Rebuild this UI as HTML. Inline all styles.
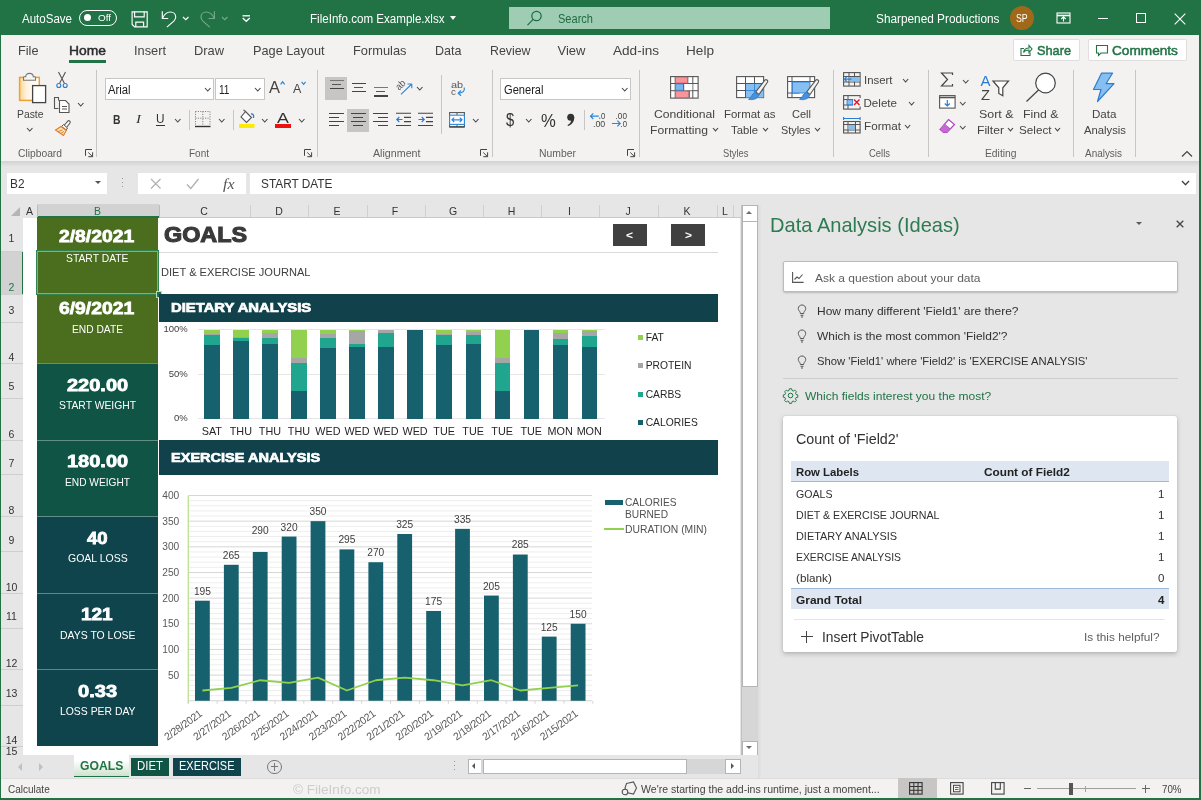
<!DOCTYPE html>
<html><head><meta charset="utf-8"><title>Excel</title>
<style>
html,body{margin:0;padding:0;}
body{will-change:transform;width:1201px;height:800px;overflow:hidden;background:#e6e6e6;position:relative;font-family:"Liberation Sans",sans-serif;}
.a{position:absolute;display:block;}
.t{position:absolute;white-space:nowrap;line-height:1;display:block;}
svg{overflow:visible;}
</style></head><body>
<!-- title+tabs -->
<div class="a" style="left:0px;top:0px;width:1201px;height:35px;background:#217346;"></div>
<span class="t" style="left:22.00px;top:12px;line-height:14px;font-size:12.00px;color:#fff;transform-origin:0 50%;transform:scaleX(0.9608);">AutoSave</span>
<div class="a" style="left:78.5px;top:10px;width:38px;height:15.5px;border:1px solid #fff;border-radius:9px;box-sizing:border-box"></div>
<div class="a" style="left:83.5px;top:14.2px;width:7px;height:7px;border-radius:50%;background:#fff"></div>
<span class="t" style="left:97.50px;top:12px;line-height:11px;font-size:9.50px;color:#fff;transform-origin:0 50%;transform:scaleX(1.0403);">Off</span>
<svg class="a" style="left:0;top:0" width="300" height="35" viewBox="0 0 300 35" fill="none" stroke="#fff" stroke-width="1.150">
<path d="M132.100 11.800h15.100v15.100h-12.600l-2.500-2.500z"/><path d="M134.600 11.800v5h9.600v-5M135.800 26.900v-4.800h7.800v4.800"/>
<path d="M162.300 11.300v7.200h5.900"/><path d="M162.500 18.300c1.600-3.700 4.600-6.300 7.900-6.300 3.100 0 5.300 2.200 5.300 5 0 1.700-.8 3-1.900 4.100l-6.900 6"/>
<path d="M183 17l2.750 2.750L188.500 17"/>
<g opacity=".38"><path d="M214.400 11.300v7.200h-5.900"/><path d="M214.200 18.300c-1.600-3.700-4.600-6.300-7.900-6.300-3.100 0-5.300 2.200-5.300 5 0 1.700.8 3 1.900 4.100l6.900 6"/><path d="M222 17l2.750 2.750L227.500 17"/></g>
<path d="M242.500 15.800h7.500" stroke-width="1.300"/><path d="M242.700 18l3.550 3.300L249.800 18" stroke-width="1.400"/>
</svg>
<span class="t" style="left:309.50px;top:12px;line-height:14px;font-size:12.00px;color:#fff;transform-origin:0 50%;transform:scaleX(0.9650);">FileInfo.com Example.xlsx</span>
<div class="a" style="left:450px;top:16px;width:0;height:0;border-left:3.8px solid transparent;border-right:3.8px solid transparent;border-top:4.2px solid #fff"></div>
<div class="a" style="left:508.5px;top:7px;width:321.5px;height:22px;background:#9fcdb3;"></div>
<svg class="a" style="left:526px;top:10px" width="17" height="17" viewBox="0 0 17 17" fill="none" stroke="#1e6b41" stroke-width="1.2"><circle cx="10.500" cy="6" r="4.700"/><path d="M7.200 9.400L1.500 15.200"/></svg>
<span class="t" style="left:557.50px;top:12px;line-height:14px;font-size:12.00px;color:#1e6b41;transform-origin:0 50%;transform:scaleX(0.9205);">Search</span>
<span class="t" style="left:876.00px;top:12px;line-height:14px;font-size:12.00px;color:#fff;transform-origin:0 50%;transform:scaleX(0.9847);">Sharpened Productions</span>
<div class="a" style="left:1010px;top:6px;width:24px;height:24px;border-radius:50%;background:#a0691a"></div>
<span class="t" style="left:1015.50px;top:13px;line-height:11px;font-size:10.20px;color:#fff;transform-origin:0 50%;transform:scaleX(0.8599);">SP</span>
<svg class="a" style="left:1056px;top:12px" width="15" height="12" viewBox="0 0 15 12" fill="none" stroke="#fff" stroke-width="1.1"><rect x="1" y="1" width="13" height="10"/><path d="M1 3.500h13" stroke-width="1.600"/><path d="M7.500 9.500v-4.500M5.300 7l2.200-2.200 2.200 2.200"/></svg>
<div class="a" style="left:1098px;top:17.6px;width:10px;height:1.1px;background:#fff;"></div>
<div class="a" style="left:1136px;top:13px;width:10px;height:10px;border:1.1px solid #fff;box-sizing:border-box"></div>
<svg class="a" style="left:1174px;top:12.500px" width="12" height="12" viewBox="0 0 12 12" stroke="#fff" stroke-width="1.100"><path d="M0.700 0.700L11.300 11.300M11.300 0.700L0.700 11.300"/></svg>
<div class="a" style="left:1px;top:35px;width:1200px;height:125.7px;background:#f3f2f1;"></div>
<span class="t" style="left:17.50px;top:43px;line-height:15px;font-size:13.00px;color:#444;transform-origin:0 50%;transform:scaleX(0.9786);">File</span>
<span class="t" style="left:133.50px;top:43px;line-height:15px;font-size:13.00px;color:#444;transform-origin:0 50%;transform:scaleX(0.9842);">Insert</span>
<span class="t" style="left:194.00px;top:43px;line-height:15px;font-size:13.00px;color:#444;transform-origin:0 50%;transform:scaleX(0.9889);">Draw</span>
<span class="t" style="left:252.50px;top:43px;line-height:15px;font-size:13.00px;color:#444;transform-origin:0 50%;transform:scaleX(0.9794);">Page Layout</span>
<span class="t" style="left:352.50px;top:43px;line-height:15px;font-size:13.00px;color:#444;transform-origin:0 50%;transform:scaleX(0.9875);">Formulas</span>
<span class="t" style="left:434.50px;top:43px;line-height:15px;font-size:13.00px;color:#444;transform-origin:0 50%;transform:scaleX(0.9650);">Data</span>
<span class="t" style="left:489.50px;top:43px;line-height:15px;font-size:13.00px;color:#444;transform-origin:0 50%;transform:scaleX(0.9502);">Review</span>
<span class="t" style="left:557.50px;top:43px;line-height:15px;font-size:13.00px;color:#444;">View</span>
<span class="t" style="left:613.00px;top:43px;line-height:15px;font-size:13.00px;color:#444;transform-origin:0 50%;transform:scaleX(1.0436);">Add-ins</span>
<span class="t" style="left:686.00px;top:43px;line-height:15px;font-size:13.00px;color:#444;transform-origin:0 50%;transform:scaleX(1.0473);">Help</span>
<span class="t" style="left:69.00px;top:43px;line-height:15px;font-size:13.20px;color:#2b2b2b;transform-origin:0 50%;transform:scaleX(1.0508);-webkit-text-stroke:.45px #2b2b2b;">Home</span>
<div class="a" style="left:69px;top:59.5px;width:37px;height:3px;background:#217346;"></div>
<div class="a" style="left:1013px;top:39px;width:66.5px;height:22px;background:#fff;border:1px solid #e1dfdd;border-radius:2px;box-sizing:border-box"></div>
<svg class="a" style="left:1019px;top:43px" width="14" height="14" viewBox="0 0 14 14" fill="none" stroke="#217346" stroke-width="1.100"><path d="M5 5.500H2v7h9V9.500"/><path d="M4.500 9.500c.5-3 2.500-4.500 5.500-4.500V2.500l3 3.500-3 3.500V7C7.500 7 5.500 7.800 4.500 9.500z"/></svg>
<span class="t" style="left:1037.00px;top:43px;line-height:15px;font-size:13.20px;color:#217346;transform-origin:0 50%;transform:scaleX(0.9653);-webkit-text-stroke:.5px #217346;">Share</span>
<div class="a" style="left:1088px;top:39px;width:99px;height:22px;background:#fff;border:1px solid #e1dfdd;border-radius:2px;box-sizing:border-box"></div>
<svg class="a" style="left:1095px;top:44px" width="14" height="13" viewBox="0 0 14 13" fill="none" stroke="#217346" stroke-width="1.100"><path d="M1.500 1.500h11v7.500H6l-2.500 2.500V9h-2z"/></svg>
<span class="t" style="left:1112.00px;top:43px;line-height:15px;font-size:13.20px;color:#217346;transform-origin:0 50%;transform:scaleX(1.0342);-webkit-text-stroke:.5px #217346;">Comments</span>
<!-- ribbon -->
<svg class="a" style="left:18px;top:72px;" width="29" height="32" viewBox="0 0 29 32" fill="none"><defs><linearGradient id="pg" x1="0" y1="0" x2="1" y2="0"><stop offset="0" stop-color="#fbd693"/><stop offset=".35" stop-color="#fdf3e0"/><stop offset="1" stop-color="#fff"/></linearGradient></defs><rect x="1.600" y="5.400" width="19.700" height="23" fill="url(#pg)" stroke="#f0a030" stroke-width="1.500"/><path d="M5.500 8.300V5.600c0-.6.300-.9.900-.9h1.300c0-2 1.300-3.300 3.800-3.300s3.800 1.300 3.800 3.300h1.300c.6 0 .9.300.9.900v2.700z" fill="#f6f5f4" stroke="#777" stroke-width="1.100"/><rect x="14.600" y="13.600" width="13" height="17" fill="#fff" stroke="#444" stroke-width="1.300"/></svg>
<span class="t" style="left:16.50px;top:108px;line-height:12px;font-size:11.60px;color:#444;transform-origin:0 50%;transform:scaleX(0.8934);">Paste</span>
<svg class="a" style="left:26px;top:126.5px" width="7.5" height="5" viewBox="-1 -1 7.5 5" fill="none" stroke="#444" stroke-width="1.1"><path d="M0 0L2.75 3L5.5 0"/></svg>
<svg class="a" style="left:55px;top:71px;" width="14" height="18" viewBox="0 0 14 18" fill="none"><path d="M3.500 1L9.500 12.500M10.500 1L4.500 12.500" stroke="#555" stroke-width="1.100"/><circle cx="3.800" cy="14.500" r="2" stroke="#2b7cd3" stroke-width="1.100"/><circle cx="10.200" cy="14.500" r="2" stroke="#2b7cd3" stroke-width="1.100"/></svg>
<svg class="a" style="left:53px;top:96px;" width="18" height="18" viewBox="0 0 18 18" fill="none"><path d="M5.500 4.500V1.500H1.500v11h4" stroke="#555" stroke-width="1.100"/><path d="M6.500 4.500h6l3.500 3.500v8.500h-9.500z" fill="#fff" stroke="#555" stroke-width="1.100"/><path d="M9 10.500h5M9 13h5" stroke="#555" stroke-width="1"/></svg>
<svg class="a" style="left:76.5px;top:101.5px" width="7.5" height="5" viewBox="-1 -1 7.5 5" fill="none" stroke="#444" stroke-width="1.1"><path d="M0 0L2.75 3L5.5 0"/></svg>
<svg class="a" style="left:54px;top:119px;" width="18" height="18" viewBox="0 0 18 18" fill="none"><path d="M10 6.500l4-4.500c1-1 3 .800 2 2l-3.500 4.500" stroke="#555" stroke-width="1.100" fill="#fff"/><path d="M9.500 5.500l4 3.500-1.500 2-4.500-3.500z" fill="#f3f2f1" stroke="#555" stroke-width="1"/><path d="M7 7.500L1.500 11l8 5.500 2.800-5z" fill="#fbe3c3" stroke="#e07a1f" stroke-width="1.100"/><path d="M4 12.500l4.500-1.500M6.500 14.500l3.500-2" stroke="#e07a1f" stroke-width=".9"/></svg>
<span class="t" style="left:18.00px;top:147px;line-height:12px;font-size:11.00px;color:#605e5c;transform-origin:0 50%;transform:scaleX(0.9345);">Clipboard</span>
<svg class="a" style="left:85px;top:149.0px;" width="9" height="9" viewBox="0 0 9 9" fill="none"><path d="M.5 6.800V.5H7" stroke="#444" stroke-width="1"/><path d="M3.300 3.500l4.200 4.100M7.600 3.300v4.400H3.300" stroke="#444" stroke-width="1"/></svg>
<div class="a" style="left:96px;top:70px;width:1px;height:87px;background:#c8c6c4;"></div>
<div class="a" style="left:105px;top:77.500px;width:109px;height:22px;background:#fff;border:1px solid #c8c6c4;box-sizing:border-box"></div>
<div class="a" style="left:215px;top:77.500px;width:49.500px;height:22px;background:#fff;border:1px solid #c8c6c4;box-sizing:border-box"></div>
<span class="t" style="left:108.00px;top:83px;line-height:14px;font-size:12.00px;color:#222;transform-origin:0 50%;transform:scaleX(0.9373);">Arial</span>
<svg class="a" style="left:203.5px;top:86.5px" width="7.5" height="5" viewBox="-1 -1 7.5 5" fill="none" stroke="#444" stroke-width="1.1"><path d="M0 0L2.75 3L5.5 0"/></svg>
<span class="t" style="left:218.50px;top:83px;line-height:14px;font-size:12.00px;color:#222;transform-origin:0 50%;transform:scaleX(0.8429);">11</span>
<svg class="a" style="left:254px;top:86.5px" width="7.5" height="5" viewBox="-1 -1 7.5 5" fill="none" stroke="#444" stroke-width="1.1"><path d="M0 0L2.75 3L5.5 0"/></svg>
<span class="t" style="left:269.40px;top:79px;line-height:17px;font-size:16.00px;color:#444;transform-origin:0 50%;transform:scaleX(1.0307);">A</span>
<svg class="a" style="left:280px;top:81px;" width="6" height="4" viewBox="0 0 6 4" fill="none"><path d="M.6 3.300L2.600 .8l2 2.500" stroke="#2b88d8" stroke-width="1.200"/></svg>
<span class="t" style="left:293.20px;top:81px;line-height:15px;font-size:12.80px;color:#444;transform-origin:0 50%;transform:scaleX(0.9722);">A</span>
<svg class="a" style="left:301.3px;top:81px;" width="6" height="4" viewBox="0 0 6 4" fill="none"><path d="M.6 .8l2 2.500 2-2.500" stroke="#2b88d8" stroke-width="1.200"/></svg>
<span class="t" style="left:112.50px;top:112px;line-height:15px;font-size:13.00px;color:#333;transform-origin:0 50%;transform:scaleX(0.7989);font-weight:bold;">B</span>
<span class="t" style="left:135.50px;top:111px;line-height:15px;font-size:13.50px;color:#333;transform-origin:0 50%;transform:scaleX(1.1122);font-style:italic;font-family:'Liberation Serif',serif;">I</span>
<span class="t" style="left:155.50px;top:112px;line-height:14px;font-size:12.50px;color:#333;transform-origin:0 50%;transform:scaleX(0.9416);">U</span>
<div class="a" style="left:155.5px;top:125.3px;width:9px;height:1.1px;background:#333;"></div>
<svg class="a" style="left:174px;top:117.5px" width="7.5" height="5" viewBox="-1 -1 7.5 5" fill="none" stroke="#444" stroke-width="1.1"><path d="M0 0L2.75 3L5.5 0"/></svg>
<div class="a" style="left:189px;top:110px;width:1px;height:20px;background:#c8c6c4;"></div>
<svg class="a" style="left:195px;top:111px;" width="16" height="17" viewBox="0 0 16 17" fill="none"><path d="M.5 .5h14.500M.5 .5v13.500M15 .5v13.500M7.800 .5v13.500M.5 7.200h14.500" stroke="#777" stroke-width="1" stroke-dasharray="1 1.400"/><path d="M0 15.500h15.500" stroke="#333" stroke-width="1.400"/></svg>
<svg class="a" style="left:218px;top:117.5px" width="7.5" height="5" viewBox="-1 -1 7.5 5" fill="none" stroke="#444" stroke-width="1.1"><path d="M0 0L2.75 3L5.5 0"/></svg>
<div class="a" style="left:232.5px;top:110px;width:1px;height:20px;background:#c8c6c4;"></div>
<svg class="a" style="left:239px;top:109px;" width="17" height="20" viewBox="0 0 17 20" fill="none"><path d="M6.500 2.500l6 6-5 5-5.500-5.500z" fill="#fff" stroke="#555" stroke-width="1.100"/><path d="M6.500 2.500L4.500 .8" stroke="#555" stroke-width="1.100"/><path d="M12 5c2-.5 3 1 2.500 4" stroke="#2b7cd3" stroke-width="1.300"/><rect x="0" y="15" width="15.500" height="4" fill="#ffeb00"/></svg>
<svg class="a" style="left:261px;top:117.5px" width="7.5" height="5" viewBox="-1 -1 7.5 5" fill="none" stroke="#444" stroke-width="1.1"><path d="M0 0L2.75 3L5.5 0"/></svg>
<span class="t" style="left:276.70px;top:110px;line-height:16px;font-size:14.80px;color:#333;transform-origin:0 50%;transform:scaleX(1.2055);">A</span>
<div class="a" style="left:275px;top:124px;width:16px;height:4px;background:#ee1111;"></div>
<svg class="a" style="left:298px;top:117.5px" width="7.5" height="5" viewBox="-1 -1 7.5 5" fill="none" stroke="#444" stroke-width="1.1"><path d="M0 0L2.75 3L5.5 0"/></svg>
<span class="t" style="left:189.00px;top:147px;line-height:12px;font-size:11.00px;color:#605e5c;transform-origin:0 50%;transform:scaleX(0.9086);">Font</span>
<svg class="a" style="left:304px;top:149.0px;" width="9" height="9" viewBox="0 0 9 9" fill="none"><path d="M.5 6.800V.5H7" stroke="#444" stroke-width="1"/><path d="M3.300 3.500l4.200 4.100M7.600 3.300v4.400H3.300" stroke="#444" stroke-width="1"/></svg>
<div class="a" style="left:316.5px;top:70px;width:1px;height:87px;background:#c8c6c4;"></div>
<div class="a" style="left:325px;top:77px;width:22px;height:22.5px;background:#c8c6c4;"></div>
<div class="a" style="left:329.5px;top:79.65px;width:14px;height:1.1px;background:#777;"></div>
<div class="a" style="left:331.8px;top:83.75px;width:9.4px;height:1.1px;background:#555;"></div>
<div class="a" style="left:329.5px;top:87.85000000000001px;width:14px;height:1.1px;background:#444;"></div>
<div class="a" style="left:351.5px;top:82.75px;width:14px;height:1.1px;background:#444;"></div>
<div class="a" style="left:353.8px;top:87.05px;width:9.4px;height:1.1px;background:#555;"></div>
<div class="a" style="left:351.5px;top:91.25px;width:14px;height:1.1px;background:#444;"></div>
<div class="a" style="left:373.5px;top:86.95px;width:14px;height:1.1px;background:#777;"></div>
<div class="a" style="left:375.8px;top:90.95px;width:9.4px;height:1.1px;background:#555;"></div>
<div class="a" style="left:373.5px;top:95.15px;width:14px;height:1.4px;background:#444;"></div>
<svg class="a" style="left:395px;top:78px;" width="19" height="19" viewBox="0 0 19 19" fill="none"><text x="0" y="0" font-family="Liberation Sans" font-size="10" fill="#555" transform="translate(4.300 12.700) rotate(-45)" textLength="10" lengthAdjust="spacingAndGlyphs">ab</text><path d="M6 16.300L16.800 6M16.800 6h-4.300M16.800 6v4.300" stroke="#2b88d8" stroke-width="1.100"/></svg>
<svg class="a" style="left:416px;top:86px" width="7.5" height="5" viewBox="-1 -1 7.5 5" fill="none" stroke="#444" stroke-width="1.1"><path d="M0 0L2.75 3L5.5 0"/></svg>
<div class="a" style="left:441px;top:75px;width:1px;height:59px;background:#c8c6c4;"></div>
<svg class="a" style="left:450px;top:79px;" width="17" height="19" viewBox="0 0 17 19" fill="none"><text x="1" y="8.700" font-family="Liberation Sans" font-size="9.800" fill="#555" textLength="12.200" lengthAdjust="spacingAndGlyphs">ab</text><text x="1" y="16.200" font-family="Liberation Sans" font-size="9.800" fill="#555">c</text><path d="M14.300 8.500c.6 3.300-1.500 5.700-5.800 5.700M11 11.500l-2.800 2.700 2.800 2.600" stroke="#2b88d8" stroke-width="1.200"/></svg>
<div class="a" style="left:347px;top:109px;width:22px;height:23px;background:#c8c6c4;"></div>
<div class="a" style="left:329px;top:112.5px;width:14.5px;height:1.1px;background:#444;"></div>
<div class="a" style="left:329px;top:116.7px;width:10px;height:1.1px;background:#444;"></div>
<div class="a" style="left:329px;top:120.9px;width:14.5px;height:1.1px;background:#444;"></div>
<div class="a" style="left:329px;top:125.1px;width:10px;height:1.1px;background:#444;"></div>
<div class="a" style="left:351px;top:112.5px;width:14.5px;height:1.1px;background:#444;"></div>
<div class="a" style="left:353.2px;top:116.7px;width:10px;height:1.1px;background:#444;"></div>
<div class="a" style="left:351px;top:120.9px;width:14.5px;height:1.1px;background:#444;"></div>
<div class="a" style="left:353.2px;top:125.1px;width:10px;height:1.1px;background:#444;"></div>
<div class="a" style="left:373px;top:112.5px;width:14.5px;height:1.1px;background:#444;"></div>
<div class="a" style="left:377.5px;top:116.7px;width:10px;height:1.1px;background:#444;"></div>
<div class="a" style="left:373px;top:120.9px;width:14.5px;height:1.1px;background:#444;"></div>
<div class="a" style="left:377.5px;top:125.1px;width:10px;height:1.1px;background:#444;"></div>
<svg class="a" style="left:396px;top:112px;" width="15" height="15" viewBox="0 0 15 15" fill="none"><path d="M0 1.300h15M0 13.500h15M8 5.400h7M8 9.600h7" stroke="#444" stroke-width="1.100"/><path d="M6.500 7.500H.8M3.300 5L.8 7.500l2.500 2.500" stroke="#2b7cd3" stroke-width="1.200"/></svg>
<svg class="a" style="left:418px;top:112px;" width="15" height="15" viewBox="0 0 15 15" fill="none"><path d="M0 1.300h15M0 13.500h15M8 5.400h7M8 9.600h7" stroke="#444" stroke-width="1.100"/><path d="M.5 7.500h5.700M3.700 5l2.500 2.500-2.500 2.500" stroke="#2b7cd3" stroke-width="1.200"/></svg>
<svg class="a" style="left:448.5px;top:111.5px;" width="16" height="16" viewBox="0 0 16 16" fill="none"><rect x=".6" y=".6" width="14.800" height="14.300" stroke="#555" stroke-width="1.100" fill="#fff"/><path d="M8 .6v2.600M8 12.400v2.500" stroke="#555" stroke-width="1"/><rect x=".6" y="3.200" width="14.800" height="9.200" fill="#fff" stroke="#2b88d8" stroke-width="1.100"/><path d="M3 7.800h10M5.200 5.600L3 7.800 5.200 10M10.800 5.600l2.200 2.200-2.200 2.200" stroke="#2b88d8" stroke-width="1.200"/><path d="M.6 14.900h14.800" stroke="#444" stroke-width="1.300"/></svg>
<svg class="a" style="left:471.5px;top:118px" width="7.5" height="5" viewBox="-1 -1 7.5 5" fill="none" stroke="#444" stroke-width="1.1"><path d="M0 0L2.75 3L5.5 0"/></svg>
<span class="t" style="left:372.50px;top:147px;line-height:12px;font-size:11.00px;color:#605e5c;transform-origin:0 50%;transform:scaleX(0.9711);">Alignment</span>
<svg class="a" style="left:479.5px;top:149.0px;" width="9" height="9" viewBox="0 0 9 9" fill="none"><path d="M.5 6.800V.5H7" stroke="#444" stroke-width="1"/><path d="M3.300 3.500l4.200 4.100M7.600 3.300v4.400H3.300" stroke="#444" stroke-width="1"/></svg>
<div class="a" style="left:492px;top:70px;width:1px;height:87px;background:#c8c6c4;"></div>
<div class="a" style="left:500px;top:77.500px;width:130.500px;height:22px;background:#fff;border:1px solid #c8c6c4;box-sizing:border-box"></div>
<span class="t" style="left:503.50px;top:83px;line-height:14px;font-size:12.00px;color:#222;transform-origin:0 50%;transform:scaleX(0.9252);">General</span>
<svg class="a" style="left:621px;top:86.5px" width="7.5" height="5" viewBox="-1 -1 7.5 5" fill="none" stroke="#444" stroke-width="1.1"><path d="M0 0L2.75 3L5.5 0"/></svg>
<span class="t" style="left:506.20px;top:110px;line-height:20px;font-size:17.50px;color:#333;transform-origin:0 50%;transform:scaleX(0.8425);">$</span>
<svg class="a" style="left:525px;top:118px" width="7.5" height="5" viewBox="-1 -1 7.5 5" fill="none" stroke="#444" stroke-width="1.1"><path d="M0 0L2.75 3L5.5 0"/></svg>
<span class="t" style="left:540.60px;top:110px;line-height:21px;font-size:18.50px;color:#333;transform-origin:0 50%;transform:scaleX(0.8997);">%</span>
<svg class="a" style="left:565px;top:112px;" width="11" height="15" viewBox="0 0 11 15" fill="none"><circle cx="5.700" cy="5.300" r="3.500" fill="#333"/><path d="M9.200 5.300c.3 4.300-2.300 7.600-6.200 8.800l-.5-1.100c2.600-1.200 3.700-3 3.700-5.400z" fill="#333"/></svg>
<div class="a" style="left:584px;top:110px;width:1px;height:20px;background:#c8c6c4;"></div>
<svg class="a" style="left:589px;top:110px;" width="18" height="19" viewBox="0 0 18 19" fill="none"><g font-family="Liberation Sans" font-size="9.500" fill="#444"><text x="12" y="8.800" textLength="4.300" lengthAdjust="spacingAndGlyphs">0</text><text x="4" y="16.900" textLength="12.300" lengthAdjust="spacingAndGlyphs">.00</text></g><circle cx="10.800" cy="8.200" r=".6" fill="#444"/><path d="M9.800 6.200H1.500M4.300 3.400L1.500 6.200l2.800 2.800" stroke="#2b88d8" stroke-width="1.200"/></svg>
<svg class="a" style="left:611px;top:110px;" width="18" height="19" viewBox="0 0 18 19" fill="none"><g font-family="Liberation Sans" font-size="9.500" fill="#444"><text x="4.600" y="8.800" textLength="11.400" lengthAdjust="spacingAndGlyphs">.00</text><text x="9.500" y="16.900" textLength="6.500" lengthAdjust="spacingAndGlyphs">.0</text></g><path d="M.9 13.500h8.300M6.400 10.700l2.800 2.800-2.800 2.800" stroke="#2b88d8" stroke-width="1.200"/></svg>
<span class="t" style="left:539.00px;top:147px;line-height:12px;font-size:11.00px;color:#605e5c;transform-origin:0 50%;transform:scaleX(0.9457);">Number</span>
<svg class="a" style="left:627px;top:149.0px;" width="9" height="9" viewBox="0 0 9 9" fill="none"><path d="M.5 6.800V.5H7" stroke="#444" stroke-width="1"/><path d="M3.300 3.500l4.200 4.100M7.600 3.300v4.400H3.300" stroke="#444" stroke-width="1"/></svg>
<div class="a" style="left:638.5px;top:70px;width:1px;height:87px;background:#c8c6c4;"></div>
<svg class="a" style="left:670px;top:76px;" width="29" height="23" viewBox="0 0 29 23" fill="none"><rect x=".6" y=".6" width="27.500" height="21.500" fill="#fff" stroke="#555" stroke-width="1.100"/><path d="M5.200 .6v21.500M17.800 .6v21.500M22.800 .6v21.500M.6 7.500h27.500M.6 14.700h27.500" stroke="#555" stroke-width="1"/><rect x="5.700" y="1.200" width="11.600" height="5.800" fill="#f8959b" stroke="#e8505b" stroke-width=".7"/><rect x="5.700" y="8" width="8" height="6.200" fill="#7ab6ee" stroke="#2b88d8" stroke-width=".7"/><rect x="5.700" y="15.200" width="13.500" height="6.300" fill="#f8959b" stroke="#e8505b" stroke-width=".7"/><rect x="13.700" y="8" width="8.600" height="6.200" fill="#fff"/><path d="M13.700 7.500v7.200M19.200 14.700v7" stroke="#555" stroke-width="1"/></svg>
<span class="t" style="left:654.00px;top:108px;line-height:12px;font-size:11.60px;color:#444;transform-origin:0 50%;transform:scaleX(1.0510);">Conditional</span>
<span class="t" style="left:649.50px;top:124px;line-height:12px;font-size:11.60px;color:#444;transform-origin:0 50%;transform:scaleX(1.0462);">Formatting</span>
<svg class="a" style="left:711.8px;top:127.19999999999999px" width="7" height="4.9" viewBox="-1 -1 7 4.9" fill="none" stroke="#444" stroke-width="1.1"><path d="M0 0L2.5 2.9L5 0"/></svg>
<svg class="a" style="left:735.5px;top:76px;" width="33" height="26" viewBox="0 0 33 26" fill="none"><rect x=".6" y=".6" width="27" height="21" fill="#fff" stroke="#555" stroke-width="1.100"/><path d="M9.500 .6v21M18.500 .6v21M.6 7.500h27M.6 14.500h27" stroke="#555" stroke-width="1"/><rect x="10" y="8" width="17.500" height="13.500" fill="#86bff0"/><path d="M18.500 8v13.500M10 14.500h17.500" stroke="#2b7cd3" stroke-width=".8"/><path d="M28.800 4.200c1.300-1.500 3.700.3 2.600 2L23 18.500l-3.300-2.500z" fill="#f3f2f1" stroke="#555" stroke-width="1.100"/><path d="M19.300 16.300l3.500 2.700c-1.200 3.800-5.500 5.500-10.300 4.300 3-1.200 3-5.600 6.800-7z" fill="#4a90d9" stroke="#2b7cd3" stroke-width=".8"/></svg>
<span class="t" style="left:724.00px;top:108px;line-height:12px;font-size:11.60px;color:#444;transform-origin:0 50%;transform:scaleX(0.9864);">Format as</span>
<span class="t" style="left:731.00px;top:124px;line-height:12px;font-size:11.60px;color:#444;transform-origin:0 50%;transform:scaleX(0.9736);">Table</span>
<svg class="a" style="left:762.3px;top:127.19999999999999px" width="7" height="4.9" viewBox="-1 -1 7 4.9" fill="none" stroke="#444" stroke-width="1.1"><path d="M0 0L2.5 2.9L5 0"/></svg>
<svg class="a" style="left:787px;top:76px;" width="33" height="26" viewBox="0 0 33 26" fill="none"><rect x=".6" y=".6" width="27" height="21" fill="#fff" stroke="#555" stroke-width="1.100"/><path d="M5 .6v21M23 .6v5M.6 5.500h27M.6 17h12" stroke="#555" stroke-width="1"/><rect x="5.500" y="6" width="17.500" height="11" fill="#86bff0" stroke="#2b7cd3" stroke-width=".8"/><path d="M28.800 4.200c1.300-1.500 3.700.3 2.600 2L23 18.500l-3.300-2.500z" fill="#f3f2f1" stroke="#555" stroke-width="1.100"/><path d="M19.300 16.300l3.500 2.700c-1.200 3.800-5.500 5.500-10.300 4.300 3-1.200 3-5.600 6.800-7z" fill="#4a90d9" stroke="#2b7cd3" stroke-width=".8"/></svg>
<span class="t" style="left:792.00px;top:108px;line-height:12px;font-size:11.60px;color:#444;transform-origin:0 50%;transform:scaleX(0.9508);">Cell</span>
<span class="t" style="left:781.00px;top:124px;line-height:12px;font-size:11.60px;color:#444;transform-origin:0 50%;transform:scaleX(0.9339);">Styles</span>
<svg class="a" style="left:814.3px;top:127.19999999999999px" width="7" height="4.9" viewBox="-1 -1 7 4.9" fill="none" stroke="#444" stroke-width="1.1"><path d="M0 0L2.5 2.9L5 0"/></svg>
<span class="t" style="left:722.50px;top:147px;line-height:12px;font-size:11.00px;color:#605e5c;transform-origin:0 50%;transform:scaleX(0.8513);">Styles</span>
<div class="a" style="left:832.5px;top:70px;width:1px;height:87px;background:#c8c6c4;"></div>
<svg class="a" style="left:843px;top:72px;" width="18" height="15" viewBox="0 0 18 15" fill="none"><rect x=".6" y=".6" width="16.500" height="13.500" stroke="#555" stroke-width="1.100"/><path d="M6 .6v13.500M11.500 .6v13.500M.6 4.500h16.500M.6 10h16.500" stroke="#555" stroke-width="1"/><rect x="6.500" y="5" width="10" height="4.500" fill="#86bff0"/><path d="M8.500 7.200H1.500M4 4.700L1.500 7.200 4 9.700" stroke="#2b7cd3" stroke-width="1.200"/></svg>
<span class="t" style="left:863.50px;top:74px;line-height:12px;font-size:11.60px;color:#444;transform-origin:0 50%;transform:scaleX(0.9824);">Insert</span>
<svg class="a" style="left:902.3px;top:77.5px" width="7.2" height="5" viewBox="-1 -1 7.2 5" fill="none" stroke="#444" stroke-width="1.1"><path d="M0 0L2.6 3L5.2 0"/></svg>
<svg class="a" style="left:843px;top:95px;" width="18" height="15" viewBox="0 0 18 15" fill="none"><rect x=".6" y=".6" width="16.500" height="13.500" stroke="#555" stroke-width="1.100"/><path d="M5 .6v13.500M.6 4.500h16.500M.6 10h16.500" stroke="#555" stroke-width="1"/><rect x="4" y="4.800" width="5.500" height="5" fill="#86bff0" stroke="#2b7cd3" stroke-width=".8"/><rect x="10" y="3" width="8" height="8.500" fill="#f3f2f1"/><path d="M11 4.500l5.500 5.500M16.500 4.500L11 10" stroke="#e81123" stroke-width="1.400"/></svg>
<span class="t" style="left:863.50px;top:97px;line-height:12px;font-size:11.60px;color:#444;">Delete</span>
<svg class="a" style="left:908px;top:100.5px" width="7.2" height="5" viewBox="-1 -1 7.2 5" fill="none" stroke="#444" stroke-width="1.1"><path d="M0 0L2.6 3L5.2 0"/></svg>
<svg class="a" style="left:843px;top:117px;" width="18" height="17" viewBox="0 0 18 17" fill="none"><path d="M.6 1.500h16.500M.6 0v3M17.100 0v3" stroke="#2b7cd3" stroke-width="1.100"/><rect x=".6" y="4.500" width="16.500" height="11.500" stroke="#555" stroke-width="1.100"/><path d="M5 4.500v11.500M12.500 4.500v11.500M.6 7.500h16.500M.6 13h16.500" stroke="#555" stroke-width="1"/><rect x="5.500" y="8" width="6.500" height="4.500" fill="#86bff0"/></svg>
<span class="t" style="left:863.50px;top:120px;line-height:12px;font-size:11.60px;color:#444;transform-origin:0 50%;transform:scaleX(1.0071);">Format</span>
<svg class="a" style="left:904px;top:123.8px" width="7.2" height="5" viewBox="-1 -1 7.2 5" fill="none" stroke="#444" stroke-width="1.1"><path d="M0 0L2.6 3L5.2 0"/></svg>
<span class="t" style="left:869.00px;top:147px;line-height:12px;font-size:11.00px;color:#605e5c;transform-origin:0 50%;transform:scaleX(0.8589);">Cells</span>
<div class="a" style="left:928px;top:70px;width:1px;height:87px;background:#c8c6c4;"></div>
<svg class="a" style="left:940px;top:72px;" width="14" height="15" viewBox="0 0 14 15" fill="none"><path d="M12.500 3V1H1.500l6 6.500-6 6.500h11v-2" stroke="#444" stroke-width="1.200"/></svg>
<svg class="a" style="left:961.5px;top:78.5px" width="7.5" height="5" viewBox="-1 -1 7.5 5" fill="none" stroke="#444" stroke-width="1.1"><path d="M0 0L2.75 3L5.5 0"/></svg>
<svg class="a" style="left:939px;top:95px;" width="17" height="14" viewBox="0 0 17 14" fill="none"><rect x=".6" y=".6" width="15.500" height="12.500" fill="#fff" stroke="#555" stroke-width="1.100"/><path d="M.6 2.500h15.500" stroke="#555" stroke-width="1.600"/><path d="M8.300 5v6M5.800 8.500l2.500 2.500 2.500-2.500" stroke="#2b7cd3" stroke-width="1.200"/></svg>
<svg class="a" style="left:959px;top:101px" width="7.5" height="5" viewBox="-1 -1 7.5 5" fill="none" stroke="#444" stroke-width="1.1"><path d="M0 0L2.75 3L5.5 0"/></svg>
<svg class="a" style="left:939px;top:118px;" width="17" height="16" viewBox="0 0 17 16" fill="none"><path d="M9.500 1.500l6 5-7.500 8h-3.500l-3.500-3z" fill="#fff" stroke="#b146c2" stroke-width="1.200"/><path d="M5 5.800l6 5" stroke="#b146c2" stroke-width="1.100"/><path d="M1.200 11.300L5 6l5.800 4.800-2.800 3.500H4.500z" fill="#c668d4"/></svg>
<svg class="a" style="left:959px;top:124.5px" width="7.5" height="5" viewBox="-1 -1 7.5 5" fill="none" stroke="#444" stroke-width="1.1"><path d="M0 0L2.75 3L5.5 0"/></svg>
<span class="t" style="left:980.50px;top:72px;line-height:17px;font-size:15.00px;color:#2b7cd3;">A</span>
<span class="t" style="left:981.00px;top:86px;line-height:17px;font-size:15.00px;color:#444;transform-origin:0 50%;transform:scaleX(0.9822);">Z</span>
<svg class="a" style="left:992px;top:80px;" width="18" height="18" viewBox="0 0 18 18" fill="none"><path d="M1 1h15.500l-5.700 6.800v8l-4-2.300V7.800z" stroke="#444" stroke-width="1.200" fill="#fff"/></svg>
<span class="t" style="left:978.50px;top:108px;line-height:12px;font-size:11.60px;color:#444;transform-origin:0 50%;transform:scaleX(1.0703);">Sort &amp;</span>
<span class="t" style="left:976.50px;top:124px;line-height:12px;font-size:11.60px;color:#444;transform-origin:0 50%;transform:scaleX(1.0474);">Filter</span>
<svg class="a" style="left:1006.8px;top:127.19999999999999px" width="7" height="4.9" viewBox="-1 -1 7 4.9" fill="none" stroke="#444" stroke-width="1.1"><path d="M0 0L2.5 2.9L5 0"/></svg>
<svg class="a" style="left:1025px;top:72px;" width="32" height="31" viewBox="0 0 32 31" fill="none"><circle cx="20.500" cy="11" r="9.800" stroke="#444" stroke-width="1.200" fill="#fff"/><path d="M13.500 18L1.500 29.500" stroke="#444" stroke-width="1.200"/></svg>
<span class="t" style="left:1023.00px;top:108px;line-height:12px;font-size:11.60px;color:#444;transform-origin:0 50%;transform:scaleX(1.0589);">Find &amp;</span>
<span class="t" style="left:1019.00px;top:124px;line-height:12px;font-size:11.60px;color:#444;transform-origin:0 50%;transform:scaleX(1.0081);">Select</span>
<svg class="a" style="left:1053.8px;top:127.19999999999999px" width="7" height="4.9" viewBox="-1 -1 7 4.9" fill="none" stroke="#444" stroke-width="1.1"><path d="M0 0L2.5 2.9L5 0"/></svg>
<span class="t" style="left:984.50px;top:147px;line-height:12px;font-size:11.00px;color:#605e5c;transform-origin:0 50%;transform:scaleX(0.9366);">Editing</span>
<div class="a" style="left:1072.5px;top:70px;width:1px;height:87px;background:#c8c6c4;"></div>
<svg class="a" style="left:1091px;top:72px;" width="25" height="31" viewBox="0 0 25 31" fill="none"><path d="M10.500 1.200h11l-6.500 10.500h8L6.500 29.500l3.500-12H2.500z" fill="#86bff0" stroke="#2b7cd3" stroke-width="1.200" stroke-linejoin="round"/></svg>
<span class="t" style="left:1092.00px;top:108px;line-height:12px;font-size:11.60px;color:#444;">Data</span>
<span class="t" style="left:1083.50px;top:124px;line-height:12px;font-size:11.60px;color:#444;transform-origin:0 50%;transform:scaleX(0.9723);">Analysis</span>
<span class="t" style="left:1085.00px;top:147px;line-height:12px;font-size:11.00px;color:#605e5c;transform-origin:0 50%;transform:scaleX(0.9033);">Analysis</span>
<div class="a" style="left:1135px;top:70px;width:1px;height:87px;background:#c8c6c4;"></div>
<svg class="a" style="left:1181px;top:150px;" width="12" height="8" viewBox="0 0 12 8" fill="none"><path d="M1 6.500L6 1.500l5 5" stroke="#444" stroke-width="1.200"/></svg>
<!-- sheet -->
<div class="a" style="left:1px;top:160.700px;width:1200px;height:6px;background:linear-gradient(#d2d2d2,#e6e6e6)"></div>
<div class="a" style="left:6.5px;top:173px;width:100.5px;height:21px;background:#fff;"></div>
<span class="t" style="left:10.00px;top:177px;line-height:14px;font-size:12.30px;color:#333;transform-origin:0 50%;transform:scaleX(0.9638);">B2</span>
<div class="a" style="left:94.500px;top:181px;width:0;height:0;border-left:3.200px solid transparent;border-right:3.200px solid transparent;border-top:3.500px solid #555"></div>
<div class="a" style="left:121.5px;top:178px;width:1.3px;height:1.3px;background:#999;"></div>
<div class="a" style="left:121.5px;top:182px;width:1.3px;height:1.3px;background:#999;"></div>
<div class="a" style="left:121.5px;top:186px;width:1.3px;height:1.3px;background:#999;"></div>
<div class="a" style="left:137.5px;top:173px;width:108.5px;height:21px;background:#fff;"></div>
<svg class="a" style="left:150px;top:177.5px;" width="12" height="12" viewBox="0 0 12 12" fill="none"><path d="M1 1l9.500 9.500M10.500 1L1 10.500" stroke="#b0b0b0" stroke-width="1.200"/></svg>
<svg class="a" style="left:186px;top:177.5px;" width="14" height="12" viewBox="0 0 14 12" fill="none"><path d="M1 6.500l3.800 4L12.500 1" stroke="#b0b0b0" stroke-width="1.300"/></svg>
<span class="t" style="left:222.50px;top:176px;line-height:16px;font-size:14.50px;color:#555;transform-origin:0 50%;transform:scaleX(1.0990);font-style:italic;font-family:'Liberation Serif',serif;">fx</span>
<div class="a" style="left:250px;top:173px;width:946px;height:21px;background:#fff;"></div>
<span class="t" style="left:260.50px;top:177px;line-height:14px;font-size:12.30px;color:#333;transform-origin:0 50%;transform:scaleX(0.9627);">START DATE</span>
<svg class="a" style="left:1181px;top:180px" width="9" height="5.8" viewBox="-1 -1 9 5.8" fill="none" stroke="#444" stroke-width="1.3"><path d="M0 0L3.5 3.8L7 0"/></svg>
<div class="a" style="left:23px;top:218px;width:717px;height:537px;background:#fff;"></div>
<div class="a" style="left:36.5px;top:204px;width:122.2px;height:13px;background:#d2d2d2;"></div>
<div class="a" style="left:36.5px;top:216.2px;width:122.2px;height:1.7px;background:#217346;"></div>
<span class="t" style="left:26.00px;top:205px;line-height:12px;font-size:10.50px;color:#333;">A</span>
<span class="t" style="left:200.21px;top:205px;line-height:12px;font-size:10.50px;color:#333;">C</span>
<span class="t" style="left:275.21px;top:205px;line-height:12px;font-size:10.50px;color:#333;">D</span>
<span class="t" style="left:333.50px;top:205px;line-height:12px;font-size:10.50px;color:#333;">E</span>
<span class="t" style="left:391.79px;top:205px;line-height:12px;font-size:10.50px;color:#333;">F</span>
<span class="t" style="left:448.92px;top:205px;line-height:12px;font-size:10.50px;color:#333;">G</span>
<span class="t" style="left:507.71px;top:205px;line-height:12px;font-size:10.50px;color:#333;">H</span>
<span class="t" style="left:568.04px;top:205px;line-height:12px;font-size:10.50px;color:#333;">I</span>
<span class="t" style="left:625.38px;top:205px;line-height:12px;font-size:10.50px;color:#333;">J</span>
<span class="t" style="left:683.50px;top:205px;line-height:12px;font-size:10.50px;color:#333;">K</span>
<span class="t" style="left:722.08px;top:205px;line-height:12px;font-size:10.50px;color:#333;">L</span>
<span class="t" style="left:94.00px;top:205px;line-height:12px;font-size:10.50px;color:#217346;">B</span>
<div class="a" style="left:36.5px;top:205px;width:1px;height:12px;background:#bdbdbd;"></div>
<div class="a" style="left:159px;top:205px;width:1px;height:12px;background:#bdbdbd;"></div>
<div class="a" style="left:250px;top:205px;width:1px;height:12px;background:#cfcfcf;"></div>
<div class="a" style="left:308px;top:205px;width:1px;height:12px;background:#cfcfcf;"></div>
<div class="a" style="left:366.5px;top:205px;width:1px;height:12px;background:#cfcfcf;"></div>
<div class="a" style="left:424.5px;top:205px;width:1px;height:12px;background:#cfcfcf;"></div>
<div class="a" style="left:482.5px;top:205px;width:1px;height:12px;background:#cfcfcf;"></div>
<div class="a" style="left:540.5px;top:205px;width:1px;height:12px;background:#cfcfcf;"></div>
<div class="a" style="left:598.5px;top:205px;width:1px;height:12px;background:#cfcfcf;"></div>
<div class="a" style="left:657.5px;top:205px;width:1px;height:12px;background:#cfcfcf;"></div>
<div class="a" style="left:716.5px;top:205px;width:1px;height:12px;background:#cfcfcf;"></div>
<div class="a" style="left:733px;top:205px;width:1px;height:12px;background:#cfcfcf;"></div>
<div class="a" style="left:11.300px;top:206.500px;width:0;height:0;border-left:9.500px solid transparent;border-bottom:9.500px solid #b5b5b5"></div>
<div class="a" style="left:159px;top:217px;width:581.5px;height:1px;background:#c9c9c9;"></div>
<div class="a" style="left:740.5px;top:205px;width:1px;height:550px;background:#c0c0c0;"></div>
<div class="a" style="left:1px;top:251px;width:22px;height:43px;background:#d2d2d2;"></div>
<div class="a" style="left:21.5px;top:251px;width:1.5px;height:43px;background:#217346;"></div>
<span class="t" style="left:8.58px;top:232px;line-height:12px;font-size:10.50px;color:#333;">1</span>
<span class="t" style="left:8.58px;top:281px;line-height:12px;font-size:10.50px;color:#217346;">2</span>
<span class="t" style="left:8.58px;top:304px;line-height:12px;font-size:10.50px;color:#333;">3</span>
<span class="t" style="left:8.58px;top:351px;line-height:12px;font-size:10.50px;color:#333;">4</span>
<span class="t" style="left:8.58px;top:380px;line-height:12px;font-size:10.50px;color:#333;">5</span>
<span class="t" style="left:8.58px;top:428px;line-height:12px;font-size:10.50px;color:#333;">6</span>
<span class="t" style="left:8.58px;top:457px;line-height:12px;font-size:10.50px;color:#333;">7</span>
<span class="t" style="left:8.58px;top:504px;line-height:12px;font-size:10.50px;color:#333;">8</span>
<span class="t" style="left:8.58px;top:534px;line-height:12px;font-size:10.50px;color:#333;">9</span>
<span class="t" style="left:5.66px;top:581px;line-height:12px;font-size:10.50px;color:#333;">10</span>
<span class="t" style="left:6.05px;top:610px;line-height:12px;font-size:10.50px;color:#333;">11</span>
<span class="t" style="left:5.66px;top:657px;line-height:12px;font-size:10.50px;color:#333;">12</span>
<span class="t" style="left:5.66px;top:687px;line-height:12px;font-size:10.50px;color:#333;">13</span>
<span class="t" style="left:5.66px;top:734px;line-height:12px;font-size:10.50px;color:#333;">14</span>
<span class="t" style="left:5.66px;top:745px;line-height:12px;font-size:10.50px;color:#333;">15</span>
<div class="a" style="left:1px;top:251px;width:22px;height:1px;background:#cfcfcf;"></div>
<div class="a" style="left:1px;top:293.5px;width:22px;height:1px;background:#cfcfcf;"></div>
<div class="a" style="left:1px;top:321.5px;width:22px;height:1px;background:#cfcfcf;"></div>
<div class="a" style="left:1px;top:363px;width:22px;height:1px;background:#cfcfcf;"></div>
<div class="a" style="left:1px;top:397.5px;width:22px;height:1px;background:#cfcfcf;"></div>
<div class="a" style="left:1px;top:440px;width:22px;height:1px;background:#cfcfcf;"></div>
<div class="a" style="left:1px;top:474.3px;width:22px;height:1px;background:#cfcfcf;"></div>
<div class="a" style="left:1px;top:516.3px;width:22px;height:1px;background:#cfcfcf;"></div>
<div class="a" style="left:1px;top:551px;width:22px;height:1px;background:#cfcfcf;"></div>
<div class="a" style="left:1px;top:593px;width:22px;height:1px;background:#cfcfcf;"></div>
<div class="a" style="left:1px;top:627.6px;width:22px;height:1px;background:#cfcfcf;"></div>
<div class="a" style="left:1px;top:669.3px;width:22px;height:1px;background:#cfcfcf;"></div>
<div class="a" style="left:1px;top:704.5px;width:22px;height:1px;background:#cfcfcf;"></div>
<div class="a" style="left:1px;top:746px;width:22px;height:1px;background:#cfcfcf;"></div>
<div class="a" style="left:36.5px;top:218px;width:121.2px;height:76px;background:#4a6e1e;"></div>
<div class="a" style="left:36.5px;top:294px;width:121.2px;height:69px;background:#4a6e1e;"></div>
<div class="a" style="left:36.5px;top:363px;width:121.2px;height:77px;background:#0f5444;"></div>
<div class="a" style="left:36.5px;top:440px;width:121.2px;height:76.5px;background:#0f5444;"></div>
<div class="a" style="left:36.5px;top:516.5px;width:121.2px;height:76.5px;background:#0f444d;"></div>
<div class="a" style="left:36.5px;top:593px;width:121.2px;height:76.5px;background:#0f444d;"></div>
<div class="a" style="left:36.5px;top:669.5px;width:121.2px;height:76.5px;background:#0f444d;"></div>
<div class="a" style="left:36.5px;top:293.5px;width:121.2px;height:1px;background:rgba(255,255,255,.35);"></div>
<div class="a" style="left:36.5px;top:362.5px;width:121.2px;height:1px;background:rgba(255,255,255,.35);"></div>
<div class="a" style="left:36.5px;top:439.5px;width:121.2px;height:1px;background:rgba(255,255,255,.35);"></div>
<div class="a" style="left:36.5px;top:516.0px;width:121.2px;height:1px;background:rgba(255,255,255,.35);"></div>
<div class="a" style="left:36.5px;top:592.5px;width:121.2px;height:1px;background:rgba(255,255,255,.35);"></div>
<div class="a" style="left:36.5px;top:669.0px;width:121.2px;height:1px;background:rgba(255,255,255,.35);"></div>
<span class="t" style="left:59.40px;top:227.55px;font-size:17.3px;font-weight:bold;color:#fff;-webkit-text-stroke:0.8px #fff;transform-origin:0 50%;transform:scaleX(1.1167);">2/8/2021</span>
<span class="t" style="left:59.40px;top:300.05px;font-size:17.3px;font-weight:bold;color:#fff;-webkit-text-stroke:0.8px #fff;transform-origin:0 50%;transform:scaleX(1.1167);">6/9/2021</span>
<span class="t" style="left:66.90px;top:376.55px;font-size:17.3px;font-weight:bold;color:#fff;-webkit-text-stroke:0.8px #fff;transform-origin:0 50%;transform:scaleX(1.1566);">220.00</span>
<span class="t" style="left:66.90px;top:453.05px;font-size:17.3px;font-weight:bold;color:#fff;-webkit-text-stroke:0.8px #fff;transform-origin:0 50%;transform:scaleX(1.1566);">180.00</span>
<span class="t" style="left:87.40px;top:529.55px;font-size:17.3px;font-weight:bold;color:#fff;-webkit-text-stroke:0.8px #fff;transform-origin:0 50%;transform:scaleX(1.0757);">40</span>
<span class="t" style="left:81.40px;top:606.05px;font-size:17.3px;font-weight:bold;color:#fff;-webkit-text-stroke:0.8px #fff;transform-origin:0 50%;transform:scaleX(1.0982);">121</span>
<span class="t" style="left:77.90px;top:682.55px;font-size:17.3px;font-weight:bold;color:#fff;-webkit-text-stroke:0.8px #fff;transform-origin:0 50%;transform:scaleX(1.1642);">0.33</span>
<span class="t" style="left:66.20px;top:252px;line-height:12px;font-size:10.50px;color:#fff;transform-origin:0 50%;transform:scaleX(0.9858);">START DATE</span>
<span class="t" style="left:72.00px;top:323px;line-height:12px;font-size:10.50px;color:#fff;transform-origin:0 50%;transform:scaleX(0.9749);">END DATE</span>
<span class="t" style="left:59.00px;top:399px;line-height:12px;font-size:10.50px;color:#fff;transform-origin:0 50%;transform:scaleX(0.9850);">START WEIGHT</span>
<span class="t" style="left:65.00px;top:476px;line-height:12px;font-size:10.50px;color:#fff;transform-origin:0 50%;transform:scaleX(0.9690);">END WEIGHT</span>
<span class="t" style="left:68.00px;top:552px;line-height:12px;font-size:10.50px;color:#fff;">GOAL LOSS</span>
<span class="t" style="left:60.00px;top:629px;line-height:12px;font-size:10.50px;color:#fff;transform-origin:0 50%;transform:scaleX(0.9952);">DAYS TO LOSE</span>
<span class="t" style="left:60.00px;top:705px;line-height:12px;font-size:10.50px;color:#fff;transform-origin:0 50%;transform:scaleX(0.9902);">LOSS PER DAY</span>
<div class="a" style="left:35.500px;top:250px;width:123.700px;height:44.500px;border:1.700px solid #2f8450;box-sizing:border-box;box-shadow:inset 0 0 0 1px rgba(255,255,255,.4)"></div>
<div class="a" style="left:155.5px;top:291px;width:4.5px;height:4.5px;background:#217346;border:.8px solid rgba(255,255,255,.7);box-sizing:content-box;"></div>
<span class="t" style="left:164.35px;top:224.60px;font-size:21.5px;font-weight:bold;color:#3a3a3a;-webkit-text-stroke:1.1px #3a3a3a;transform-origin:0 50%;transform:scaleX(1.0870);">GOALS</span>
<div class="a" style="left:159px;top:251.5px;width:559px;height:1px;background:#d9d9d9;"></div>
<span class="t" style="left:160.50px;top:266px;line-height:12px;font-size:10.50px;color:#404040;transform-origin:0 50%;transform:scaleX(1.0559);">DIET &amp; EXERCISE JOURNAL</span>
<div class="a" style="left:612.5px;top:224px;width:34px;height:21.5px;background:#404040;"></div>
<div class="a" style="left:671px;top:224px;width:34px;height:21.5px;background:#404040;"></div>
<span class="t" style="left:626.00px;top:229px;line-height:12px;font-size:11.00px;color:#fff;transform-origin:0 50%;transform:scaleX(1.0897);font-weight:bold;">&lt;</span>
<span class="t" style="left:684.50px;top:229px;line-height:12px;font-size:11.00px;color:#fff;transform-origin:0 50%;transform:scaleX(1.0897);font-weight:bold;">&gt;</span>
<div class="a" style="left:159px;top:293.5px;width:558.6px;height:28.3px;background:#11414b;"></div>
<span class="t" style="left:170.85px;top:300.85px;font-size:13.2px;font-weight:bold;color:#fff;-webkit-text-stroke:0.7px #fff;transform-origin:0 50%;transform:scaleX(1.1230);">DIETARY ANALYSIS</span>
<div class="a" style="left:159px;top:440px;width:558.6px;height:34.5px;background:#11414b;"></div>
<span class="t" style="left:170.85px;top:450.85px;font-size:13.2px;font-weight:bold;color:#fff;-webkit-text-stroke:0.7px #fff;transform-origin:0 50%;transform:scaleX(1.1022);">EXERCISE ANALYSIS</span>
<div class="a" style="left:198px;top:329.0px;width:407px;height:1px;background:#e6e6e6;"></div>
<div class="a" style="left:198px;top:373.7px;width:407px;height:1px;background:#e6e6e6;"></div>
<div class="a" style="left:198px;top:418.25px;width:407px;height:1px;background:#e6e6e6;"></div>
<span class="t" style="left:163.50px;top:323px;line-height:11px;font-size:9.50px;color:#404040;">100%</span>
<span class="t" style="left:168.79px;top:368px;line-height:11px;font-size:9.50px;color:#404040;">50%</span>
<span class="t" style="left:174.07px;top:412px;line-height:11px;font-size:9.50px;color:#404040;">0%</span>
<div class="a" style="left:204.25px;top:329.50px;width:15.25px;height:89.25px;background:#92d050;"></div>
<div class="a" style="left:204.25px;top:333.78px;width:15.25px;height:84.97px;background:#a6a6a6;"></div>
<div class="a" style="left:204.25px;top:335.48px;width:15.25px;height:83.27px;background:#20a68f;"></div>
<div class="a" style="left:204.25px;top:345.03px;width:15.25px;height:73.72px;background:#17616e;"></div>
<span class="t" style="left:201.75px;top:425px;line-height:12px;font-size:10.80px;color:#262626;">SAT</span>
<div class="a" style="left:233.28px;top:329.50px;width:15.25px;height:89.25px;background:#92d050;"></div>
<div class="a" style="left:233.28px;top:336.64px;width:15.25px;height:82.11px;background:#a6a6a6;"></div>
<div class="a" style="left:233.28px;top:338.25px;width:15.25px;height:80.50px;background:#20a68f;"></div>
<div class="a" style="left:233.28px;top:341.28px;width:15.25px;height:77.47px;background:#17616e;"></div>
<span class="t" style="left:229.78px;top:425px;line-height:12px;font-size:10.80px;color:#262626;">THU</span>
<div class="a" style="left:262.31px;top:329.50px;width:15.25px;height:89.25px;background:#92d050;"></div>
<div class="a" style="left:262.31px;top:333.07px;width:15.25px;height:85.68px;background:#a6a6a6;"></div>
<div class="a" style="left:262.31px;top:337.98px;width:15.25px;height:80.77px;background:#20a68f;"></div>
<div class="a" style="left:262.31px;top:344.23px;width:15.25px;height:74.52px;background:#17616e;"></div>
<span class="t" style="left:258.81px;top:425px;line-height:12px;font-size:10.80px;color:#262626;">THU</span>
<div class="a" style="left:291.34px;top:329.50px;width:15.25px;height:89.25px;background:#92d050;"></div>
<div class="a" style="left:291.34px;top:358.06px;width:15.25px;height:60.69px;background:#a6a6a6;"></div>
<div class="a" style="left:291.34px;top:363.24px;width:15.25px;height:55.51px;background:#20a68f;"></div>
<div class="a" style="left:291.34px;top:390.99px;width:15.25px;height:27.76px;background:#17616e;"></div>
<span class="t" style="left:287.84px;top:425px;line-height:12px;font-size:10.80px;color:#262626;">THU</span>
<div class="a" style="left:320.37px;top:329.50px;width:15.25px;height:89.25px;background:#92d050;"></div>
<div class="a" style="left:320.37px;top:333.52px;width:15.25px;height:85.23px;background:#a6a6a6;"></div>
<div class="a" style="left:320.37px;top:338.25px;width:15.25px;height:80.50px;background:#20a68f;"></div>
<div class="a" style="left:320.37px;top:348.24px;width:15.25px;height:70.51px;background:#17616e;"></div>
<span class="t" style="left:315.37px;top:425px;line-height:12px;font-size:10.80px;color:#262626;">WED</span>
<div class="a" style="left:349.40px;top:329.50px;width:15.25px;height:89.25px;background:#92d050;"></div>
<div class="a" style="left:349.40px;top:331.28px;width:15.25px;height:87.47px;background:#a6a6a6;"></div>
<div class="a" style="left:349.40px;top:343.51px;width:15.25px;height:75.24px;background:#20a68f;"></div>
<div class="a" style="left:349.40px;top:346.73px;width:15.25px;height:72.02px;background:#17616e;"></div>
<span class="t" style="left:344.40px;top:425px;line-height:12px;font-size:10.80px;color:#262626;">WED</span>
<div class="a" style="left:378.43px;top:329.50px;width:15.25px;height:89.25px;background:#92d050;"></div>
<div class="a" style="left:378.43px;top:330.39px;width:15.25px;height:88.36px;background:#a6a6a6;"></div>
<div class="a" style="left:378.43px;top:333.07px;width:15.25px;height:85.68px;background:#20a68f;"></div>
<div class="a" style="left:378.43px;top:347.35px;width:15.25px;height:71.40px;background:#17616e;"></div>
<span class="t" style="left:373.43px;top:425px;line-height:12px;font-size:10.80px;color:#262626;">WED</span>
<div class="a" style="left:407.46px;top:329.50px;width:15.25px;height:89.25px;background:#92d050;"></div>
<div class="a" style="left:407.46px;top:329.50px;width:15.25px;height:89.25px;background:#a6a6a6;"></div>
<div class="a" style="left:407.46px;top:329.50px;width:15.25px;height:89.25px;background:#20a68f;"></div>
<div class="a" style="left:407.46px;top:329.50px;width:15.25px;height:89.25px;background:#17616e;"></div>
<span class="t" style="left:402.46px;top:425px;line-height:12px;font-size:10.80px;color:#262626;">WED</span>
<div class="a" style="left:436.49px;top:329.50px;width:15.25px;height:89.25px;background:#92d050;"></div>
<div class="a" style="left:436.49px;top:333.78px;width:15.25px;height:84.97px;background:#a6a6a6;"></div>
<div class="a" style="left:436.49px;top:335.48px;width:15.25px;height:83.27px;background:#20a68f;"></div>
<div class="a" style="left:436.49px;top:345.03px;width:15.25px;height:73.72px;background:#17616e;"></div>
<span class="t" style="left:433.29px;top:425px;line-height:12px;font-size:10.80px;color:#262626;">TUE</span>
<div class="a" style="left:465.52px;top:329.50px;width:15.25px;height:89.25px;background:#92d050;"></div>
<div class="a" style="left:465.52px;top:332.36px;width:15.25px;height:86.39px;background:#a6a6a6;"></div>
<div class="a" style="left:465.52px;top:335.03px;width:15.25px;height:83.72px;background:#20a68f;"></div>
<div class="a" style="left:465.52px;top:344.32px;width:15.25px;height:74.43px;background:#17616e;"></div>
<span class="t" style="left:462.32px;top:425px;line-height:12px;font-size:10.80px;color:#262626;">TUE</span>
<div class="a" style="left:494.55px;top:329.50px;width:15.25px;height:89.25px;background:#92d050;"></div>
<div class="a" style="left:494.55px;top:358.33px;width:15.25px;height:60.42px;background:#a6a6a6;"></div>
<div class="a" style="left:494.55px;top:363.42px;width:15.25px;height:55.34px;background:#20a68f;"></div>
<div class="a" style="left:494.55px;top:390.99px;width:15.25px;height:27.76px;background:#17616e;"></div>
<span class="t" style="left:491.35px;top:425px;line-height:12px;font-size:10.80px;color:#262626;">TUE</span>
<div class="a" style="left:523.58px;top:329.50px;width:15.25px;height:89.25px;background:#92d050;"></div>
<div class="a" style="left:523.58px;top:329.50px;width:15.25px;height:89.25px;background:#a6a6a6;"></div>
<div class="a" style="left:523.58px;top:329.50px;width:15.25px;height:89.25px;background:#20a68f;"></div>
<div class="a" style="left:523.58px;top:329.50px;width:15.25px;height:89.25px;background:#17616e;"></div>
<span class="t" style="left:520.38px;top:425px;line-height:12px;font-size:10.80px;color:#262626;">TUE</span>
<div class="a" style="left:552.61px;top:329.50px;width:15.25px;height:89.25px;background:#92d050;"></div>
<div class="a" style="left:552.61px;top:333.34px;width:15.25px;height:85.41px;background:#a6a6a6;"></div>
<div class="a" style="left:552.61px;top:339.05px;width:15.25px;height:79.70px;background:#20a68f;"></div>
<div class="a" style="left:552.61px;top:345.03px;width:15.25px;height:73.72px;background:#17616e;"></div>
<span class="t" style="left:547.61px;top:425px;line-height:12px;font-size:10.80px;color:#262626;">MON</span>
<div class="a" style="left:581.64px;top:329.50px;width:15.25px;height:89.25px;background:#92d050;"></div>
<div class="a" style="left:581.64px;top:330.84px;width:15.25px;height:87.91px;background:#a6a6a6;"></div>
<div class="a" style="left:581.64px;top:335.75px;width:15.25px;height:83.00px;background:#20a68f;"></div>
<div class="a" style="left:581.64px;top:346.99px;width:15.25px;height:71.76px;background:#17616e;"></div>
<span class="t" style="left:576.64px;top:425px;line-height:12px;font-size:10.80px;color:#262626;">MON</span>
<div class="a" style="left:638.3px;top:335.2px;width:5px;height:5px;background:#92d050;"></div>
<span class="t" style="left:645.70px;top:332px;line-height:11px;font-size:10.30px;color:#262626;">FAT</span>
<div class="a" style="left:638.3px;top:363.2px;width:5px;height:5px;background:#a6a6a6;"></div>
<span class="t" style="left:645.70px;top:360px;line-height:11px;font-size:10.30px;color:#262626;">PROTEIN</span>
<div class="a" style="left:638.3px;top:391.5px;width:5px;height:5px;background:#20a68f;"></div>
<span class="t" style="left:645.70px;top:389px;line-height:11px;font-size:10.30px;color:#262626;">CARBS</span>
<div class="a" style="left:638.3px;top:419.5px;width:5px;height:5px;background:#17616e;"></div>
<span class="t" style="left:645.70px;top:417px;line-height:11px;font-size:10.30px;color:#262626;">CALORIES</span>
<svg class="a" style="left:0;top:0" width="760" height="760" viewBox="0 0 760 760" fill="none"><path d="M188.5 695.62H592" stroke="#eeeeee" stroke-width="1"/><path d="M188.5 690.49H592" stroke="#eeeeee" stroke-width="1"/><path d="M188.5 685.36H592" stroke="#eeeeee" stroke-width="1"/><path d="M188.5 680.23H592" stroke="#eeeeee" stroke-width="1"/><path d="M188.5 675.10H592" stroke="#d6d6d6" stroke-width="1"/><path d="M188.5 669.96H592" stroke="#eeeeee" stroke-width="1"/><path d="M188.5 664.83H592" stroke="#eeeeee" stroke-width="1"/><path d="M188.5 659.70H592" stroke="#eeeeee" stroke-width="1"/><path d="M188.5 654.57H592" stroke="#eeeeee" stroke-width="1"/><path d="M188.5 649.44H592" stroke="#d6d6d6" stroke-width="1"/><path d="M188.5 644.31H592" stroke="#eeeeee" stroke-width="1"/><path d="M188.5 639.18H592" stroke="#eeeeee" stroke-width="1"/><path d="M188.5 634.05H592" stroke="#eeeeee" stroke-width="1"/><path d="M188.5 628.92H592" stroke="#eeeeee" stroke-width="1"/><path d="M188.5 623.78H592" stroke="#d6d6d6" stroke-width="1"/><path d="M188.5 618.65H592" stroke="#eeeeee" stroke-width="1"/><path d="M188.5 613.52H592" stroke="#eeeeee" stroke-width="1"/><path d="M188.5 608.39H592" stroke="#eeeeee" stroke-width="1"/><path d="M188.5 603.26H592" stroke="#eeeeee" stroke-width="1"/><path d="M188.5 598.13H592" stroke="#d6d6d6" stroke-width="1"/><path d="M188.5 593.00H592" stroke="#eeeeee" stroke-width="1"/><path d="M188.5 587.87H592" stroke="#eeeeee" stroke-width="1"/><path d="M188.5 582.74H592" stroke="#eeeeee" stroke-width="1"/><path d="M188.5 577.61H592" stroke="#eeeeee" stroke-width="1"/><path d="M188.5 572.48H592" stroke="#d6d6d6" stroke-width="1"/><path d="M188.5 567.34H592" stroke="#eeeeee" stroke-width="1"/><path d="M188.5 562.21H592" stroke="#eeeeee" stroke-width="1"/><path d="M188.5 557.08H592" stroke="#eeeeee" stroke-width="1"/><path d="M188.5 551.95H592" stroke="#eeeeee" stroke-width="1"/><path d="M188.5 546.82H592" stroke="#d6d6d6" stroke-width="1"/><path d="M188.5 541.69H592" stroke="#eeeeee" stroke-width="1"/><path d="M188.5 536.56H592" stroke="#eeeeee" stroke-width="1"/><path d="M188.5 531.43H592" stroke="#eeeeee" stroke-width="1"/><path d="M188.5 526.30H592" stroke="#eeeeee" stroke-width="1"/><path d="M188.5 521.16H592" stroke="#d6d6d6" stroke-width="1"/><path d="M188.5 516.03H592" stroke="#eeeeee" stroke-width="1"/><path d="M188.5 510.90H592" stroke="#eeeeee" stroke-width="1"/><path d="M188.5 505.77H592" stroke="#eeeeee" stroke-width="1"/><path d="M188.5 500.64H592" stroke="#eeeeee" stroke-width="1"/><path d="M188.5 495.51H592" stroke="#d6d6d6" stroke-width="1"/><path d="M188.25 495.51V703.5" stroke="#b5de85" stroke-width="1.200"/><path d="M188.5 700.75H592" stroke="#d4d4d4" stroke-width="1"/><path d="M188.25 700.75v3" stroke="#d4d4d4" stroke-width="1"/><path d="M217.15 700.75v3" stroke="#d4d4d4" stroke-width="1"/><path d="M246.05 700.75v3" stroke="#d4d4d4" stroke-width="1"/><path d="M274.95 700.75v3" stroke="#d4d4d4" stroke-width="1"/><path d="M303.85 700.75v3" stroke="#d4d4d4" stroke-width="1"/><path d="M332.75 700.75v3" stroke="#d4d4d4" stroke-width="1"/><path d="M361.65 700.75v3" stroke="#d4d4d4" stroke-width="1"/><path d="M390.55 700.75v3" stroke="#d4d4d4" stroke-width="1"/><path d="M419.45 700.75v3" stroke="#d4d4d4" stroke-width="1"/><path d="M448.35 700.75v3" stroke="#d4d4d4" stroke-width="1"/><path d="M477.25 700.75v3" stroke="#d4d4d4" stroke-width="1"/><path d="M506.15 700.75v3" stroke="#d4d4d4" stroke-width="1"/><path d="M535.05 700.75v3" stroke="#d4d4d4" stroke-width="1"/><path d="M563.95 700.75v3" stroke="#d4d4d4" stroke-width="1"/><path d="M592.85 700.75v3" stroke="#d4d4d4" stroke-width="1"/><rect x="195.00" y="600.70" width="14.800" height="100.05" fill="#17616e"/><rect x="223.90" y="564.78" width="14.800" height="135.97" fill="#17616e"/><rect x="252.80" y="551.95" width="14.800" height="148.80" fill="#17616e"/><rect x="281.70" y="536.56" width="14.800" height="164.19" fill="#17616e"/><rect x="310.60" y="521.16" width="14.800" height="179.59" fill="#17616e"/><rect x="339.50" y="549.39" width="14.800" height="151.36" fill="#17616e"/><rect x="368.40" y="562.21" width="14.800" height="138.54" fill="#17616e"/><rect x="397.30" y="533.99" width="14.800" height="166.76" fill="#17616e"/><rect x="426.20" y="610.96" width="14.800" height="89.79" fill="#17616e"/><rect x="455.10" y="528.86" width="14.800" height="171.89" fill="#17616e"/><rect x="484.00" y="595.56" width="14.800" height="105.19" fill="#17616e"/><rect x="512.90" y="554.52" width="14.800" height="146.23" fill="#17616e"/><rect x="541.80" y="636.61" width="14.800" height="64.14" fill="#17616e"/><rect x="570.70" y="623.78" width="14.800" height="76.97" fill="#17616e"/><polyline points="202.40,690.49 231.30,687.92 260.20,680.23 289.10,682.79 318.00,677.66 346.90,690.49 375.80,680.23 404.70,677.66 433.60,680.23 462.50,685.36 491.40,680.23 520.30,690.49 549.20,687.92 578.10,685.36" stroke="#92d050" stroke-width="1.800" fill="none" stroke-linejoin="round"/></svg>
<span class="t" style="left:193.89px;top:586px;line-height:11px;font-size:10.20px;color:#404040;">195</span>
<span class="t" style="left:222.79px;top:550px;line-height:11px;font-size:10.20px;color:#404040;">265</span>
<span class="t" style="left:251.69px;top:525px;line-height:11px;font-size:10.20px;color:#404040;">290</span>
<span class="t" style="left:280.59px;top:522px;line-height:11px;font-size:10.20px;color:#404040;">320</span>
<span class="t" style="left:309.49px;top:506px;line-height:11px;font-size:10.20px;color:#404040;">350</span>
<span class="t" style="left:338.39px;top:534px;line-height:11px;font-size:10.20px;color:#404040;">295</span>
<span class="t" style="left:367.29px;top:547px;line-height:11px;font-size:10.20px;color:#404040;">270</span>
<span class="t" style="left:396.19px;top:519px;line-height:11px;font-size:10.20px;color:#404040;">325</span>
<span class="t" style="left:425.09px;top:596px;line-height:11px;font-size:10.20px;color:#404040;">175</span>
<span class="t" style="left:453.99px;top:514px;line-height:11px;font-size:10.20px;color:#404040;">335</span>
<span class="t" style="left:482.89px;top:581px;line-height:11px;font-size:10.20px;color:#404040;">205</span>
<span class="t" style="left:511.79px;top:539px;line-height:11px;font-size:10.20px;color:#404040;">285</span>
<span class="t" style="left:540.69px;top:622px;line-height:11px;font-size:10.20px;color:#404040;">125</span>
<span class="t" style="left:569.59px;top:609px;line-height:11px;font-size:10.20px;color:#404040;">150</span>
<span class="t" style="left:167.95px;top:670px;line-height:11px;font-size:10.20px;color:#595959;">50</span>
<span class="t" style="left:162.28px;top:644px;line-height:11px;font-size:10.20px;color:#595959;">100</span>
<span class="t" style="left:162.28px;top:618px;line-height:11px;font-size:10.20px;color:#595959;">150</span>
<span class="t" style="left:162.28px;top:593px;line-height:11px;font-size:10.20px;color:#595959;">200</span>
<span class="t" style="left:162.28px;top:567px;line-height:11px;font-size:10.20px;color:#595959;">250</span>
<span class="t" style="left:162.28px;top:541px;line-height:11px;font-size:10.20px;color:#595959;">300</span>
<span class="t" style="left:162.28px;top:516px;line-height:11px;font-size:10.20px;color:#595959;">350</span>
<span class="t" style="left:162.28px;top:490px;line-height:11px;font-size:10.20px;color:#595959;">400</span>
<svg class="a" style="left:0;top:0" width="760" height="760" viewBox="0 0 760 760" font-family="Liberation Sans" font-size="10.5" fill="#595959"><text x="203.10" y="715" text-anchor="end" textLength="44" lengthAdjust="spacing" transform="rotate(-36 203.10 715)">2/28/2021</text><text x="232.00" y="715" text-anchor="end" textLength="44" lengthAdjust="spacing" transform="rotate(-36 232.00 715)">2/27/2021</text><text x="260.90" y="715" text-anchor="end" textLength="44" lengthAdjust="spacing" transform="rotate(-36 260.90 715)">2/26/2021</text><text x="289.80" y="715" text-anchor="end" textLength="44" lengthAdjust="spacing" transform="rotate(-36 289.80 715)">2/25/2021</text><text x="318.70" y="715" text-anchor="end" textLength="44" lengthAdjust="spacing" transform="rotate(-36 318.70 715)">2/24/2021</text><text x="347.60" y="715" text-anchor="end" textLength="44" lengthAdjust="spacing" transform="rotate(-36 347.60 715)">2/23/2021</text><text x="376.50" y="715" text-anchor="end" textLength="44" lengthAdjust="spacing" transform="rotate(-36 376.50 715)">2/22/2021</text><text x="405.40" y="715" text-anchor="end" textLength="44" lengthAdjust="spacing" transform="rotate(-36 405.40 715)">2/21/2021</text><text x="434.30" y="715" text-anchor="end" textLength="44" lengthAdjust="spacing" transform="rotate(-36 434.30 715)">2/20/2021</text><text x="463.20" y="715" text-anchor="end" textLength="44" lengthAdjust="spacing" transform="rotate(-36 463.20 715)">2/19/2021</text><text x="492.10" y="715" text-anchor="end" textLength="44" lengthAdjust="spacing" transform="rotate(-36 492.10 715)">2/18/2021</text><text x="521.00" y="715" text-anchor="end" textLength="44" lengthAdjust="spacing" transform="rotate(-36 521.00 715)">2/17/2021</text><text x="549.90" y="715" text-anchor="end" textLength="44" lengthAdjust="spacing" transform="rotate(-36 549.90 715)">2/16/2021</text><text x="578.80" y="715" text-anchor="end" textLength="44" lengthAdjust="spacing" transform="rotate(-36 578.80 715)">2/15/2021</text></svg>
<div class="a" style="left:605.2px;top:500.3px;width:17.6px;height:5px;background:#17616e;"></div>
<span class="t" style="left:625.00px;top:497px;line-height:11px;font-size:10.30px;color:#505050;transform-origin:0 50%;transform:scaleX(0.9887);">CALORIES</span>
<span class="t" style="left:625.00px;top:509px;line-height:11px;font-size:10.30px;color:#505050;transform-origin:0 50%;transform:scaleX(0.9886);">BURNED</span>
<div class="a" style="left:604.3px;top:528.2px;width:19.3px;height:2px;background:#92d050;"></div>
<span class="t" style="left:625.00px;top:524px;line-height:11px;font-size:10.30px;color:#505050;transform-origin:0 50%;transform:scaleX(1.0046);">DURATION (MIN)</span>
<!-- chrome+pane -->
<div class="a" style="left:741.5px;top:205px;width:16.5px;height:550px;background:#e6e6e6;"></div>
<div class="a" style="left:742px;top:205px;width:15.800px;height:16.500px;background:#fff;border:1px solid #b4b4b4;box-sizing:border-box"></div>
<div class="a" style="left:746px;top:210.8px;width:0;height:0;border-left:3.8px solid transparent;border-right:3.8px solid transparent;border-bottom:3.8px solid #6d6d6d"></div>
<div class="a" style="left:742px;top:221px;width:15.800px;height:466px;background:#fff;border:1px solid #b4b4b4;box-sizing:border-box"></div>
<div class="a" style="left:742px;top:687px;width:15.8px;height:54px;background:#d6d6d6;"></div>
<div class="a" style="left:742px;top:741px;width:15.800px;height:14.500px;background:#fff;border:1px solid #b4b4b4;box-sizing:border-box"></div>
<div class="a" style="left:746px;top:746.3px;width:0;height:0;border-left:3.8px solid transparent;border-right:3.8px solid transparent;border-top:3.8px solid #6d6d6d"></div>
<div class="a" style="left:1px;top:755px;width:758px;height:23px;background:#e6e6e6;"></div>
<div class="a" style="left:17.5px;top:762.5px;width:0;height:0;border-top:4px solid transparent;border-bottom:4px solid transparent;border-right:4px solid #c0c0c0"></div>
<div class="a" style="left:38.5px;top:762.5px;width:0;height:0;border-top:4px solid transparent;border-bottom:4px solid transparent;border-left:4px solid #c0c0c0"></div>
<div class="a" style="left:73.8px;top:755px;width:55.7px;height:21.5px;background:linear-gradient(#fff,#fff 25%,#cfe3cf);border-bottom:1.500px solid #217346;box-sizing:border-box;"></div>
<span class="t" style="left:80.00px;top:758px;line-height:15px;font-size:12.80px;color:#217346;transform-origin:0 50%;transform:scaleX(0.9514);font-weight:bold;">GOALS</span>
<div class="a" style="left:131.3px;top:757.5px;width:38.2px;height:18px;background:#0f5444;"></div>
<span class="t" style="left:137.00px;top:758px;line-height:15px;font-size:12.80px;color:#fff;transform-origin:0 50%;transform:scaleX(0.8917);">DIET</span>
<div class="a" style="left:172.5px;top:757.5px;width:68px;height:18px;background:#0f444d;"></div>
<span class="t" style="left:178.80px;top:758px;line-height:15px;font-size:12.80px;color:#fff;transform-origin:0 50%;transform:scaleX(0.8574);">EXERCISE</span>
<div class="a" style="left:267px;top:759.500px;width:14.500px;height:14.500px;border:1.1px solid #777;border-radius:50%;box-sizing:border-box"></div>
<div class="a" style="left:270.5px;top:766.2px;width:7.5px;height:1.1px;background:#777;"></div>
<div class="a" style="left:273.7px;top:763px;width:1.1px;height:7.5px;background:#777;"></div>
<div class="a" style="left:453.5px;top:761px;width:1.3px;height:1.3px;background:#999;"></div>
<div class="a" style="left:453.5px;top:765px;width:1.3px;height:1.3px;background:#999;"></div>
<div class="a" style="left:453.5px;top:769px;width:1.3px;height:1.3px;background:#999;"></div>
<div class="a" style="left:467.500px;top:758.800px;width:14px;height:15.500px;background:#fff;border:1px solid #b4b4b4;box-sizing:border-box"></div>
<div class="a" style="left:471.5px;top:762.8px;width:0;height:0;border-top:3.8px solid transparent;border-bottom:3.8px solid transparent;border-right:3.8px solid #555"></div>
<div class="a" style="left:481px;top:758.8px;width:245px;height:15.5px;background:#d6d6d6;"></div>
<div class="a" style="left:482.500px;top:758.800px;width:204.300px;height:15.500px;background:#fff;border:1px solid #b4b4b4;box-sizing:border-box"></div>
<div class="a" style="left:725px;top:758.800px;width:15.500px;height:15.500px;background:#fff;border:1px solid #b4b4b4;box-sizing:border-box"></div>
<div class="a" style="left:731px;top:762.8px;width:0;height:0;border-top:3.8px solid transparent;border-bottom:3.8px solid transparent;border-left:3.8px solid #555"></div>
<div class="a" style="left:1px;top:777.5px;width:1200px;height:22.5px;background:#f3f2f1;border-top:1px solid #dcdcdc;box-sizing:border-box;"></div>
<span class="t" style="left:8.30px;top:783px;line-height:12px;font-size:11.50px;color:#444;transform-origin:0 50%;transform:scaleX(0.8698);">Calculate</span>
<span class="t" style="left:292.70px;top:782px;line-height:15px;font-size:13.30px;color:#cdcdcd;transform-origin:0 50%;transform:scaleX(1.0194);">© FileInfo.com</span>
<svg class="a" style="left:621.3px;top:781.3px;" width="17" height="15" viewBox="0 0 17 15" fill="none"><path d="M5.500 2.500l7-1.500 3 6-3 6-7-1.500-1.500-4.500z" stroke="#555" stroke-width="1.100"/><circle cx="4" cy="11" r="2.800" fill="#f3f2f1" stroke="#555" stroke-width="1.100"/></svg>
<span class="t" style="left:640.60px;top:783px;line-height:12px;font-size:11.50px;color:#444;transform-origin:0 50%;transform:scaleX(0.9174);">We're starting the add-ins runtime, just a moment...</span>
<div class="a" style="left:897.5px;top:778px;width:39.5px;height:21px;background:#c8c6c4;"></div>
<svg class="a" style="left:909px;top:781.5px;" width="14" height="13" viewBox="0 0 14 13" fill="none"><rect x=".6" y=".6" width="12.500" height="11.500" stroke="#333" stroke-width="1.100"/><path d="M4.800 .6v11.500M9 .6v11.500M.6 4.500h12.500M.6 8.300h12.500" stroke="#333" stroke-width="1"/></svg>
<svg class="a" style="left:950px;top:781.5px;" width="14" height="13" viewBox="0 0 14 13" fill="none"><rect x=".6" y=".6" width="12.500" height="11.500" stroke="#444" stroke-width="1.100"/><rect x="3.500" y="3.300" width="6.500" height="6.500" stroke="#444" stroke-width="1"/><path d="M5 5.500h3.500M5 7.500h3.500" stroke="#444" stroke-width=".8"/></svg>
<svg class="a" style="left:990.5px;top:781.5px;" width="14" height="13" viewBox="0 0 14 13" fill="none"><rect x=".6" y=".6" width="12.500" height="11.500" stroke="#444" stroke-width="1.100"/><path d="M4.300 .6v6.500h5V.6" stroke="#444" stroke-width="1.100"/></svg>
<div class="a" style="left:1024px;top:788.2px;width:7px;height:1.1px;background:#666;"></div>
<div class="a" style="left:1037px;top:788.3px;width:99px;height:1px;background:#a0a0a0;"></div>
<div class="a" style="left:1085px;top:785.5px;width:1px;height:6px;background:#a0a0a0;"></div>
<div class="a" style="left:1068.5px;top:783px;width:4px;height:11.5px;background:#555;"></div>
<div class="a" style="left:1141.5px;top:788.2px;width:8px;height:1.1px;background:#666;"></div>
<div class="a" style="left:1145px;top:784.7px;width:1.1px;height:8px;background:#666;"></div>
<span class="t" style="left:1162.00px;top:783px;line-height:12px;font-size:11.00px;color:#444;transform-origin:0 50%;transform:scaleX(0.8857);">70%</span>
<div class="a" style="left:759px;top:197px;width:441px;height:581px;background:#e6e6e6;"></div>
<div class="a" style="left:758px;top:205px;width:2.5px;height:573px;background:linear-gradient(90deg,#dcdcdc,#e4e4e4);"></div>
<span class="t" style="left:770.30px;top:213px;line-height:23px;font-size:21.00px;color:#2d7b50;transform-origin:0 50%;transform:scaleX(0.9560);">Data Analysis (Ideas)</span>
<div class="a" style="left:1135.7px;top:222px;width:0;height:0;border-left:3.5px solid transparent;border-right:3.5px solid transparent;border-top:3.5px solid #5a5a5a"></div>
<svg class="a" style="left:1176.1px;top:219.5px;" width="8" height="8" viewBox="0 0 8 8" fill="none"><path d="M.7 .7l6.600 6.600M7.300 .7L.7 7.300" stroke="#444" stroke-width="1.300"/></svg>
<div class="a" style="left:782.500px;top:261px;width:395px;height:31.400px;background:#fff;border:1px solid #bcbcbc;border-radius:2px;box-sizing:border-box;box-shadow:0 1px 2px rgba(0,0,0,.2)"></div>
<svg class="a" style="left:792px;top:271.5px;" width="12" height="11" viewBox="0 0 12 11" fill="none"><path d="M.6 0v10.400h11" stroke="#555" stroke-width="1.100"/><path d="M2.500 7.500L5 5l2 1.500 3.500-4" stroke="#555" stroke-width="1.100"/></svg>
<span class="t" style="left:815.00px;top:272px;line-height:12px;font-size:11.50px;color:#605e5c;transform-origin:0 50%;transform:scaleX(1.0438);">Ask a question about your data</span>
<svg class="a" style="left:797.3px;top:304.4px;" width="10" height="14" viewBox="0 0 10 14" fill="none"><path d="M5 1C2.800 1 1.300 2.600 1.300 4.500c0 1.500.9 2.300 1.500 3.200.4.600.5 1 .5 1.800h3.400c0-.8.1-1.200.5-1.800.6-.9 1.500-1.700 1.500-3.200C8.700 2.600 7.200 1 5 1z" stroke="#555" stroke-width="1"/><path d="M3.500 11.300h3M4 13h2" stroke="#555" stroke-width="1"/></svg>
<span class="t" style="left:816.50px;top:305px;line-height:12px;font-size:11.50px;color:#323130;transform-origin:0 50%;transform:scaleX(1.0419);">How many different 'Field1' are there?</span>
<svg class="a" style="left:797.3px;top:329.4px;" width="10" height="14" viewBox="0 0 10 14" fill="none"><path d="M5 1C2.800 1 1.300 2.600 1.300 4.500c0 1.500.9 2.300 1.500 3.200.4.600.5 1 .5 1.800h3.400c0-.8.1-1.200.5-1.800.6-.9 1.500-1.700 1.500-3.200C8.700 2.600 7.200 1 5 1z" stroke="#555" stroke-width="1"/><path d="M3.500 11.300h3M4 13h2" stroke="#555" stroke-width="1"/></svg>
<span class="t" style="left:816.50px;top:330px;line-height:12px;font-size:11.50px;color:#323130;transform-origin:0 50%;transform:scaleX(1.0390);">Which is the most common 'Field2'?</span>
<svg class="a" style="left:797.3px;top:354.7px;" width="10" height="14" viewBox="0 0 10 14" fill="none"><path d="M5 1C2.800 1 1.300 2.600 1.300 4.500c0 1.500.9 2.300 1.500 3.200.4.600.5 1 .5 1.800h3.400c0-.8.1-1.200.5-1.800.6-.9 1.500-1.700 1.500-3.200C8.700 2.600 7.200 1 5 1z" stroke="#555" stroke-width="1"/><path d="M3.500 11.300h3M4 13h2" stroke="#555" stroke-width="1"/></svg>
<span class="t" style="left:816.50px;top:355px;line-height:12px;font-size:11.50px;color:#323130;transform-origin:0 50%;transform:scaleX(0.9790);">Show 'Field1' where 'Field2' is 'EXERCISE ANALYSIS'</span>
<div class="a" style="left:783px;top:378px;width:394.5px;height:1px;background:#cdcdcd;"></div>
<svg class="a" style="left:782.7px;top:388px;" width="15" height="15" viewBox="0 0 15 15" fill="none"><circle cx="7.500" cy="7.500" r="2.300" stroke="#217346" stroke-width="1"/><path d="M6.300 1h2.400l.4 1.800 1.300.6 1.600-1 1.700 1.700-1 1.600.6 1.300 1.800.4v2.400l-1.800.4-.6 1.300 1 1.600-1.700 1.700-1.600-1-1.300.6-.4 1.800H6.300l-.4-1.800-1.300-.6-1.600 1-1.700-1.700 1-1.600-.6-1.300L0 9.800V7.400l1.800-.4.600-1.300-1-1.600 1.700-1.700 1.600 1 1.300-.6z" stroke="#217346" stroke-width="1" transform="translate(.3 -.2) scale(.96)"/></svg>
<span class="t" style="left:805.20px;top:390px;line-height:12px;font-size:11.50px;color:#217346;transform-origin:0 50%;transform:scaleX(1.0447);">Which fields interest you the most?</span>
<div class="a" style="left:783px;top:416px;width:394px;height:235.500px;background:#fff;border-radius:2px;box-shadow:0 2px 5px rgba(0,0,0,.22),0 0 1px rgba(0,0,0,.25)"></div>
<span class="t" style="left:795.70px;top:431px;line-height:16px;font-size:14.70px;color:#323130;transform-origin:0 50%;transform:scaleX(0.9743);">Count of 'Field2'</span>
<div class="a" style="left:791px;top:460.5px;width:377.5px;height:21.2px;background:#dde6f1;border-bottom:1.500px solid #9fb9db;box-sizing:border-box;"></div>
<span class="t" style="left:795.50px;top:466px;line-height:12px;font-size:11.50px;color:#222;transform-origin:0 50%;transform:scaleX(0.9859);font-weight:bold;">Row Labels</span>
<span class="t" style="left:984.20px;top:466px;line-height:12px;font-size:11.50px;color:#222;transform-origin:0 50%;transform:scaleX(1.0253);font-weight:bold;">Count of Field2</span>
<span class="t" style="left:795.50px;top:488px;line-height:12px;font-size:11.50px;color:#323130;transform-origin:0 50%;transform:scaleX(0.9211);">GOALS</span>
<span class="t" style="left:1158.10px;top:488px;line-height:12px;font-size:11.50px;color:#323130;">1</span>
<span class="t" style="left:795.50px;top:509px;line-height:12px;font-size:11.50px;color:#323130;transform-origin:0 50%;transform:scaleX(0.9253);">DIET &amp; EXERCISE JOURNAL</span>
<span class="t" style="left:1158.10px;top:509px;line-height:12px;font-size:11.50px;color:#323130;">1</span>
<span class="t" style="left:795.50px;top:530px;line-height:12px;font-size:11.50px;color:#323130;transform-origin:0 50%;transform:scaleX(0.9481);">DIETARY ANALYSIS</span>
<span class="t" style="left:1158.10px;top:530px;line-height:12px;font-size:11.50px;color:#323130;">1</span>
<span class="t" style="left:795.50px;top:551px;line-height:12px;font-size:11.50px;color:#323130;transform-origin:0 50%;transform:scaleX(0.9043);">EXERCISE ANALYSIS</span>
<span class="t" style="left:1158.10px;top:551px;line-height:12px;font-size:11.50px;color:#323130;">1</span>
<span class="t" style="left:795.50px;top:572px;line-height:12px;font-size:11.50px;color:#323130;transform-origin:0 50%;transform:scaleX(1.0184);">(blank)</span>
<span class="t" style="left:1158.10px;top:572px;line-height:12px;font-size:11.50px;color:#323130;">0</span>
<div class="a" style="left:791px;top:587.5px;width:377.5px;height:21.7px;background:#dde6f1;border-top:1.500px solid #9fb9db;box-sizing:border-box;"></div>
<span class="t" style="left:795.50px;top:594px;line-height:12px;font-size:11.50px;color:#222;transform-origin:0 50%;transform:scaleX(1.0365);font-weight:bold;">Grand Total</span>
<span class="t" style="left:1158.10px;top:594px;line-height:12px;font-size:11.50px;color:#222;font-weight:bold;">4</span>
<div class="a" style="left:794px;top:618.5px;width:371px;height:1px;background:#e5e5e5;"></div>
<div class="a" style="left:800.5px;top:636px;width:12px;height:1.1px;background:#444;"></div>
<div class="a" style="left:806px;top:630.5px;width:1.1px;height:12px;background:#444;"></div>
<span class="t" style="left:821.50px;top:629px;line-height:16px;font-size:14.00px;color:#323130;transform-origin:0 50%;transform:scaleX(0.9855);">Insert PivotTable</span>
<span class="t" style="left:1084.00px;top:631px;line-height:12px;font-size:11.50px;color:#605e5c;transform-origin:0 50%;transform:scaleX(1.0270);">Is this helpful?</span>
<div class="a" style="left:0px;top:0px;width:1px;height:800px;background:#217346;"></div>
<div class="a" style="left:1199.3px;top:0px;width:1.7px;height:800px;background:#217346;"></div>
<div class="a" style="left:0px;top:798.3px;width:1201px;height:1.7px;background:#217346;"></div>
</body></html>
